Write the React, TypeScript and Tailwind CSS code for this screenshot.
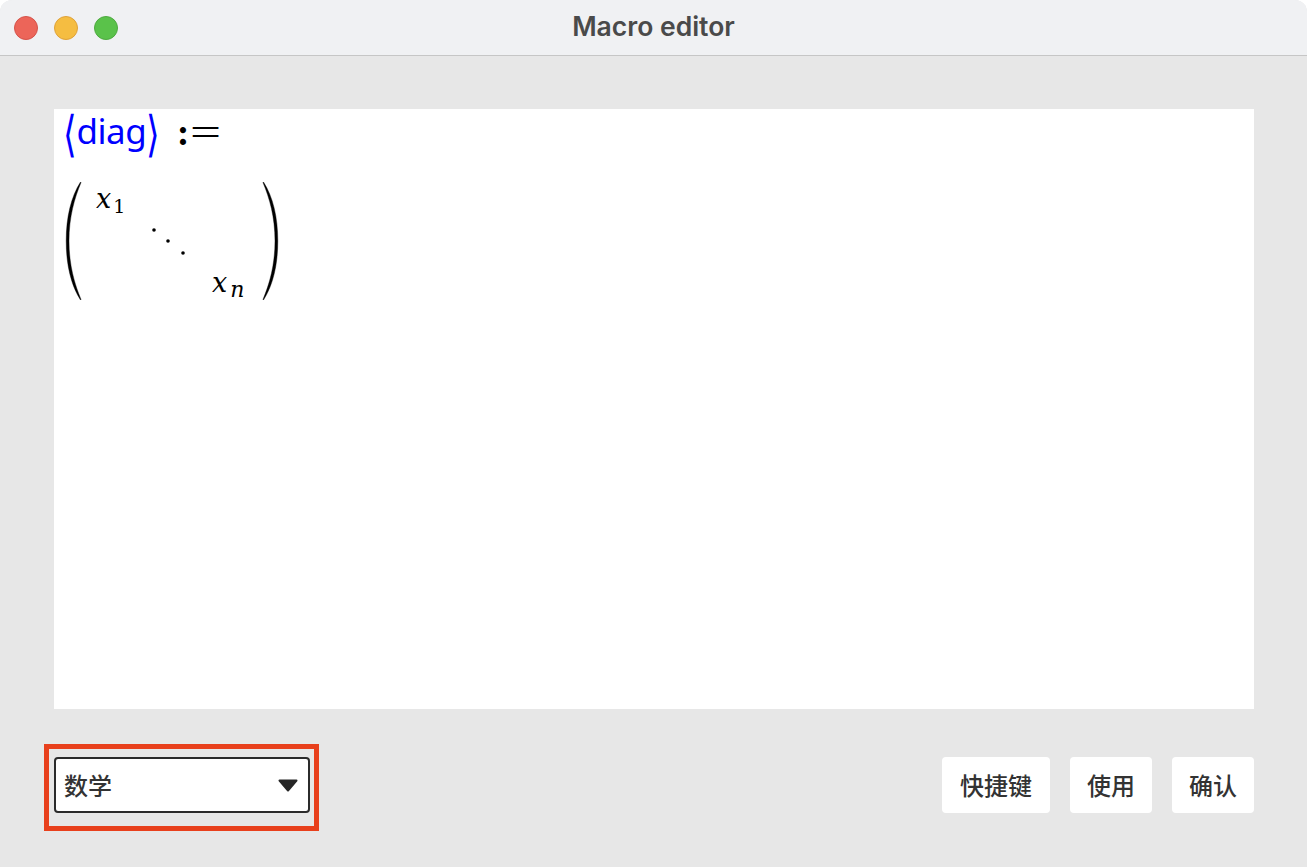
const sans = "font-['Inter','Noto_Sans_CJK_SC',sans-serif]";
const cjk = "font-['Noto_Sans_CJK_SC',sans-serif] font-medium text-[24px] text-[#333] leading-none";

const Paren = ({ flip }: { flip?: boolean }) => (
  <svg width="17" height="120" viewBox="0 0 17 120" className={flip ? "-scale-x-100" : ""}>
    <path
      d="M15.5 1 C6 16 1.2 36 1.2 60 C1.2 84 6 104 15.5 119 L16 118.4 C9.5 103 4 84 4 60 C4 36 9.5 17 16 1.6 Z"
      fill="#000"
      stroke="#000"
      strokeWidth="0.4"
    />
  </svg>
);

const TrafficLight = ({ className }: { className: string }) => (
  <span className={`w-6 h-6 rounded-full border ${className}`} />
);

const Btn = ({ label, className }: { label: string; className: string }) => (
  <button className={`h-14 bg-white rounded ${cjk} ${className}`}>{label}</button>
);

const Entry = ({ sub, subClass }: { sub: string; subClass: string }) => (
  <span className="font-['DejaVu_Serif',serif] italic text-[27px] font-normal leading-none text-black whitespace-nowrap">
    x<span className={`relative top-[5px] ${subClass}`}>{sub}</span>
  </span>
);

const App = () => {
  return (
    <div className={`w-full h-[867px] bg-white overflow-hidden ${sans}`}>
      <div className="h-full bg-[#e7e7e7] rounded-t-[12px] overflow-hidden flex flex-col">
        <div className="relative h-[56px] shrink-0 bg-[#f0f1f3] border-b border-[#c6c6c6] flex items-center pl-[14px] gap-4">
          <TrafficLight className="bg-[#ec6559] border-[#d5534a]" />
          <TrafficLight className="bg-[#f5bd41] border-[#dfa23a]" />
          <TrafficLight className="bg-[#5ac24a] border-[#4eaa40]" />
          <span className="absolute left-0 right-0 top-0 h-[52px] leading-[52px] text-center text-[26.5px] font-semibold text-[#4a4a4a]">
            Macro editor
          </span>
        </div>

        <div className="flex-1 flex flex-col pt-[53px] pl-[54px] pr-[53px]">
          <div className="h-[600px] bg-white pl-[11px] pt-[2px]">
            <div className="flex items-center h-[46px] -mt-[2px]">
              <span className="font-['Noto_Sans',sans-serif] text-[35px] leading-none text-[#0000ff] tracking-[-0.5px] flex items-center">
                <span className="-ml-[2px] scale-y-[1.4]">⟨</span>
                <span className="-mt-[3px]">diag</span>
                <span className="scale-y-[1.4]">⟩</span>
              </span>
              <span className="ml-[17px] font-['Liberation_Serif',serif] text-[38px] leading-none text-black font-bold">
                :
              </span>
              <span className="ml-[1px] font-['Liberation_Serif',serif] text-[38px] leading-none text-black scale-x-[1.45] origin-left">
                =
              </span>
            </div>
            <div className="flex mt-[26px]">
              <Paren />
              <div className="w-[180px] h-[120px] grid grid-cols-3 grid-rows-3 pl-[14px] pr-[16px]">
                <div className="pt-[4px]"><Entry sub="1" subClass="text-[19px] not-italic ml-[2px]" /></div>
                <div />
                <div />
                <div />
                <svg width="40" height="32" viewBox="0 0 40 32" className="mt-[3px] ml-[4px]">
                  <circle cx="4" cy="6" r="1.8" fill="#000" />
                  <circle cx="18" cy="17" r="1.8" fill="#000" />
                  <circle cx="33" cy="29" r="1.8" fill="#000" />
                </svg>
                <div />
                <div />
                <div />
                <div className="flex items-end pb-[5px] ml-[16px]"><Entry sub="n" subClass="text-[22px] ml-[3px]" /></div>
              </div>
              <Paren flip />
            </div>
          </div>

          <div className="flex items-start justify-between mt-[48px]">
            <div className="relative w-[256px] h-14 bg-white border-2 border-[#2b2b2b] rounded flex items-center justify-between pl-[8px] pr-[10px]">
              <span className={cjk}>数学</span>
              <svg width="20" height="13" viewBox="0 0 20 13">
                <path d="M1.5 1.5 H18.5 L10 11.5 Z" fill="#262626" stroke="#262626" strokeWidth="2" strokeLinejoin="round" />
              </svg>
              <div className="absolute -left-[12px] -right-[11px] -top-[15px] -bottom-[20px] border-[5px] border-[#e8401c] pointer-events-none" />
            </div>
            <div className="flex gap-5">
              <Btn label="快捷键" className="w-[108px]" />
              <Btn label="使用" className="w-[82px]" />
              <Btn label="确认" className="w-[82px]" />
            </div>
          </div>
        </div>
      </div>
    </div>
  );
};

export default App;
